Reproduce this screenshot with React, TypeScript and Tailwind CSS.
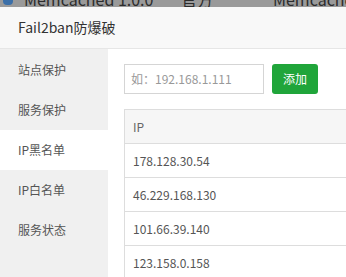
import React from "react";

const font = { fontFamily: '"Noto Sans CJK SC", "Open Sans", sans-serif' };

export default function App() {
  const items = ["站点保护", "服务保护", "IP黑名单", "IP白名单", "服务状态"];
  const ips = ["178.128.30.54", "46.229.168.130", "101.66.39.140", "123.158.0.158"];
  return (
    <div className="w-[346px] h-[277px] overflow-hidden bg-white flex flex-col" style={font}>
      {/* top background strip (overlay) */}
      <div className="h-[7px] bg-[#9a9a9a] overflow-hidden relative shrink-0">
        <div className="flex items-center h-[16px] -mt-[9px] text-[16px] leading-[16px] text-[#2c2c2c] whitespace-nowrap">
          <div className="w-[10px] h-[12px] ml-[3px] bg-[#3b6fa8] rounded-sm shrink-0" />
          <span className="ml-[11px] w-[157px] shrink-0">Memcached 1.0.0</span>
          <span className="w-[92px] shrink-0">官方</span>
          <span className="shrink-0">Memcached</span>
        </div>
      </div>
      {/* title */}
      <div className="h-[42px] shrink-0 bg-[#f8f8f8] border-b border-[#e6e6e6] flex items-center pl-[18px] text-[14px] text-[#333]">
        Fail2ban防爆破
      </div>
      <div className="flex flex-1 min-h-0">
        {/* sidebar */}
        <div className="w-[108px] bg-[#f0f0f0] flex flex-col pt-[1px] shrink-0">
          {items.map((t, i) => (
            <div
              key={t}
              className={
                "h-[40px] flex items-center pl-[18px] text-[12px] text-[#555] " +
                (i === 2 ? "bg-white" : "")
              }
            >
              {t}
            </div>
          ))}
        </div>
        {/* content */}
        <div className="flex-1 pl-[16px] pt-[15px] bg-white">
          <div className="flex items-center gap-[8px]">
            <div className="w-[140px] h-[30px] border border-[#d5d5d5] flex items-center pl-[6px] text-[12px] text-[#999]">
              如：192.168.1.111
            </div>
            <div className="w-[46px] h-[30px] bg-[#20a53a] rounded-[3px] flex items-center justify-center text-[12px] text-white">
              添加
            </div>
          </div>
          <div className="mt-[15px] border border-[#ddd] border-r-0">
            <div className="h-[34px] bg-[#f6f6f6] border-b border-[#ddd] flex items-center pl-[8px] text-[12px] text-[#666]">
              IP
            </div>
            {ips.map((ip) => (
              <div
                key={ip}
                className="h-[34px] border-b border-[#ddd] flex items-center pl-[8px] text-[12px] text-[#555]"
              >
                {ip}
              </div>
            ))}
          </div>
        </div>
      </div>
    </div>
  );
}
